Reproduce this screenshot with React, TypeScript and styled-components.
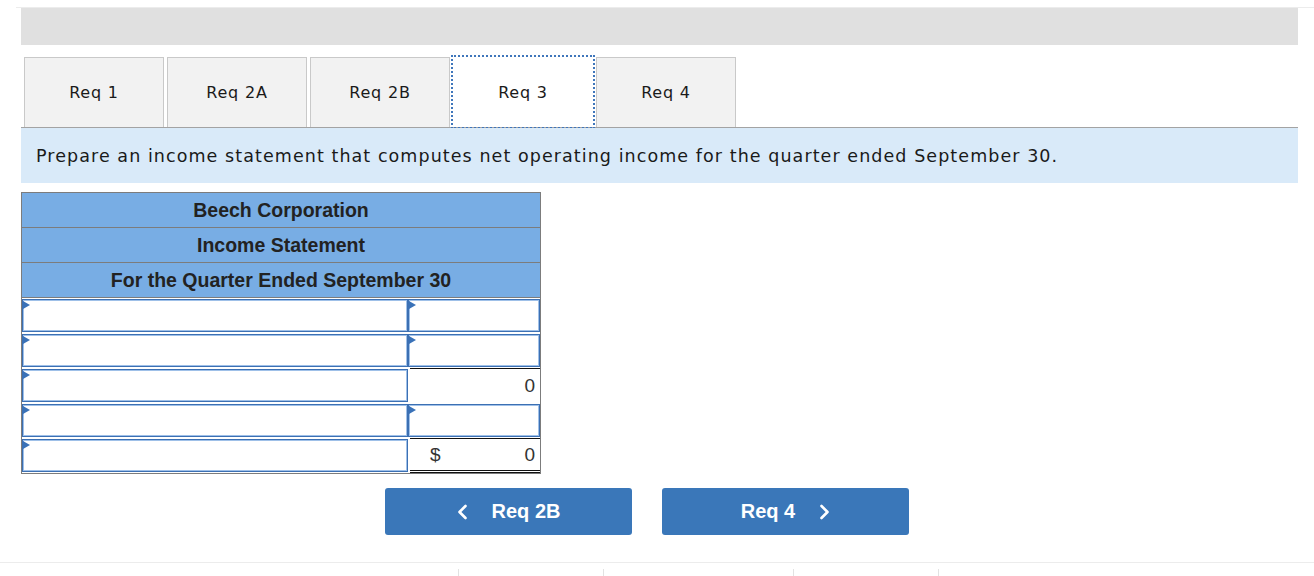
import React from "react";
import styled, { createGlobalStyle, css } from "styled-components";

const Global = createGlobalStyle`
  html, body { margin: 0; padding: 0; background: #fff; }
  body { width: 1314px; height: 576px; overflow: hidden; font-family: "DejaVu Sans", Verdana, sans-serif; }
`;

const Page = styled.div`
  width: 1314px;
  height: 576px;
  display: flex;
  flex-direction: column;
`;

const TopRule = styled.div`
  height: 7px;
  margin-left: 16px;
  border-bottom: 1px solid #ececec;
  flex-shrink: 0;
`;

const Content = styled.div`
  margin-left: 21px;
  width: 1277px;
  display: flex;
  flex-direction: column;
`;

const GrayBar = styled.div`
  height: 37px;
  background: #e0e0e0;
`;

const TabRow = styled.div`
  margin-top: 12px;
  display: flex;
  gap: 3px;
  padding-left: 3px;
  border-bottom: 1px solid #a3a3a3;
`;

const Tab = styled.div<{ $active?: boolean }>`
  box-sizing: border-box;
  width: 140px;
  height: 70px;
  display: flex;
  align-items: center;
  justify-content: center;
  font-family: "DejaVu Sans", Verdana, sans-serif;
  font-size: 16px;
  letter-spacing: 0.8px;
  color: #1a1a1a;
  background: #f2f2f2;
  border: 1px solid #c9c9c9;
  border-bottom: none;
  ${(p) =>
    p.$active &&
    css`
      background: #fff;
      border-color: transparent;
      outline: 2px dotted #3f76bb;
      outline-offset: 0px;
    `}
`;

const Instruction = styled.div`
  height: 55px;
  background: #d9eaf9;
  display: flex;
  align-items: center;
  padding-left: 15px;
  font-family: "DejaVu Sans", Verdana, sans-serif;
  font-size: 17.5px;
  letter-spacing: 1.07px;
  color: #1a1a1a;
`;

const Statement = styled.div`
  margin-top: 9px;
  width: 520px;
  box-sizing: border-box;
  border: 1px solid #7c7c7c;
  display: flex;
  flex-direction: column;
  font-family: "Liberation Sans", Arial, sans-serif;
`;

const HeadRow = styled.div`
  height: 34px;
  background: #78ade4;
  border-bottom: 1px solid #7c7c7c;
  display: flex;
  align-items: center;
  justify-content: center;
  font-weight: bold;
  font-size: 19.5px;
  color: #222;
`;

const DataRow = styled.div`
  display: grid;
  grid-template-columns: 386px 132px;
  height: 35px;
`;

const InputCell = styled.div`
  position: relative;
  box-sizing: border-box;
  margin: 1px 0 1px 0;
  border: 1px solid #3c70b3;
  box-shadow: inset 0 0 0 1px #9fc0e8;
  background: #fff;
  &::before {
    content: "";
    position: absolute;
    left: 0;
    top: 1px;
    border-top: 4px solid transparent;
    border-bottom: 4px solid transparent;
    border-left: 7px solid #3a72b8;
  }
`;

const ValueCell = styled.div<{ $total?: boolean }>`
  box-sizing: border-box;
  display: flex;
  align-items: center;
  justify-content: space-between;
  padding: 0 5px 0 20px;
  margin-left: 2px;
  border-top: 1px solid #111;
  font-size: 19px;
  color: #333;
  ${(p) =>
    p.$total &&
    css`
      border-bottom: 3px double #111;
    `}
`;

const Buttons = styled.div`
  margin-top: 14px;
  margin-left: 364px;
  display: flex;
  gap: 30px;
`;

const NavButton = styled.div`
  width: 247px;
  height: 47px;
  background: #3a77b9;
  border-radius: 3px;
  color: #fff;
  font-family: "Liberation Sans", Arial, sans-serif;
  font-weight: bold;
  font-size: 20px;
  display: flex;
  align-items: center;
  justify-content: center;
  gap: 24px;
`;

const BottomRule = styled.div`
  margin-top: 27px;
  height: 1px;
  background: #ececec;
`;

const Ticks = styled.div`
  margin-top: 6px;
  height: 8px;
  display: flex;
  padding-left: 458px;
`;

const Tick = styled.div<{ $w: number }>`
  box-sizing: border-box;
  width: ${(p) => p.$w}px;
  border-left: 1px solid #e2e2e2;
`;

const Chevron = ({ dir }: { dir: "left" | "right" }) => (
  <svg width="11" height="16" viewBox="0 0 11 16">
    <path
      d={dir === "left" ? "M8.5 2 L2.5 8 L8.5 14" : "M2.5 2 L8.5 8 L2.5 14"}
      fill="none"
      stroke="#fff"
      strokeWidth="2.6"
      strokeLinecap="round"
      strokeLinejoin="round"
    />
  </svg>
);

export default function App() {
  return (
    <Page>
      <Global />
      <TopRule />
      <Content>
        <GrayBar />
        <TabRow>
          <Tab>Req 1</Tab>
          <Tab>Req 2A</Tab>
          <Tab>Req 2B</Tab>
          <Tab $active>Req 3</Tab>
          <Tab>Req 4</Tab>
        </TabRow>
        <Instruction>
          Prepare an income statement that computes net operating income for the quarter ended September 30.
        </Instruction>
        <Statement>
          <HeadRow>Beech Corporation</HeadRow>
          <HeadRow>Income Statement</HeadRow>
          <HeadRow>For the Quarter Ended September 30</HeadRow>
          <DataRow>
            <InputCell />
            <InputCell />
          </DataRow>
          <DataRow>
            <InputCell />
            <InputCell />
          </DataRow>
          <DataRow>
            <InputCell />
            <ValueCell>
              <span />
              <span>0</span>
            </ValueCell>
          </DataRow>
          <DataRow>
            <InputCell />
            <InputCell />
          </DataRow>
          <DataRow>
            <InputCell />
            <ValueCell $total>
              <span>$</span>
              <span>0</span>
            </ValueCell>
          </DataRow>
        </Statement>
        <Buttons>
          <NavButton>
            <Chevron dir="left" />
            <span>Req 2B</span>
          </NavButton>
          <NavButton>
            <span>Req 4</span>
            <Chevron dir="right" />
          </NavButton>
        </Buttons>
      </Content>
      <BottomRule />
      <Ticks>
        <Tick $w={145} />
        <Tick $w={190} />
        <Tick $w={145} />
        <Tick $w={1} />
      </Ticks>
    </Page>
  );
}
